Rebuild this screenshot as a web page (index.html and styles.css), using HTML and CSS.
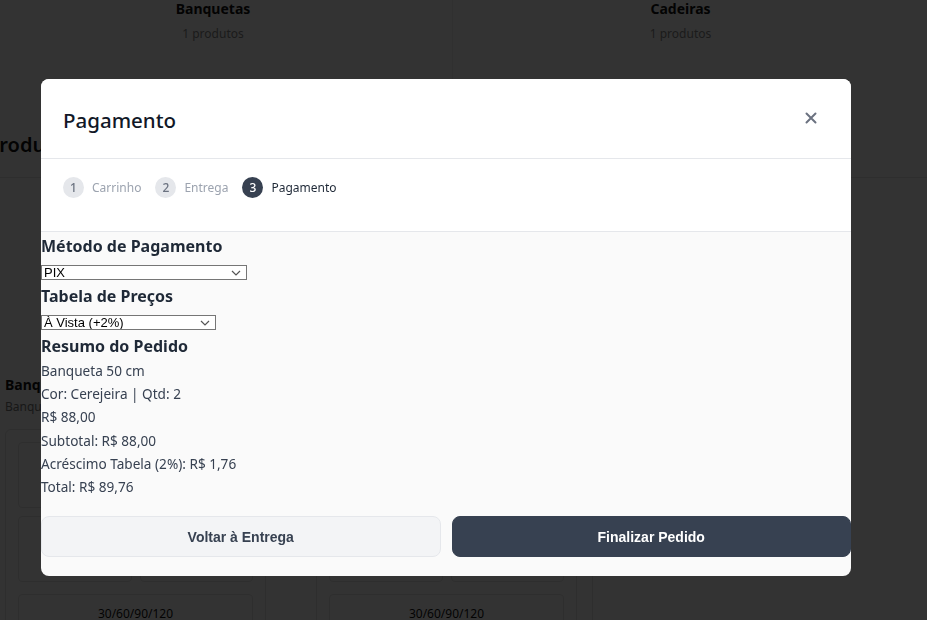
FILE: index.html
```html
<!DOCTYPE html>
<html lang="pt-BR">
<head>
<meta charset="utf-8">
<title>Pagamento</title>
<link rel="stylesheet" href="styles.css">
</head>
<body>
<div class="page">
  <div class="cats">
    <div class="cat"><div class="cat-name">Banquetas</div><div class="cat-count">1 produtos</div></div>
    <div class="cat"><div class="cat-name">Cadeiras</div><div class="cat-count">1 produtos</div></div>
  </div>
  <h2 class="sec-title">Produtos</h2>
  <div class="products">
    <div class="prod">
      <div class="prod-name">Banqueta 50 cm</div>
      <div class="prod-sub">Banqueta de madeira</div>
      <div class="prod-box">
        <div class="prod-grid"><div class="cell"></div><div class="cell"></div><div class="cell"></div><div class="cell"></div></div>
        <div class="cell wide">30/60/90/120</div>
      </div>
    </div>
    <div class="prod">
      <div class="prod-name">Cadeira</div>
      <div class="prod-sub">Cadeira de madeira</div>
      <div class="prod-box">
        <div class="prod-grid"><div class="cell"></div><div class="cell"></div><div class="cell"></div><div class="cell"></div></div>
        <div class="cell wide">30/60/90/120</div>
      </div>
    </div>
    <div class="prod side"></div>
  </div>
</div>

<div class="overlay">
  <div class="modal">
    <div class="modal-head">
      <h1 class="modal-title">Pagamento</h1>
      <button class="close" aria-label="Fechar">
        <svg width="12" height="12" viewBox="0 0 12 12"><path d="M1.5 1.5L10.5 10.5M10.5 1.5L1.5 10.5" stroke="#6b7280" stroke-width="2" stroke-linecap="round"/></svg>
      </button>
    </div>
    <div class="steps">
      <div class="step"><span class="num">1</span><span class="label">Carrinho</span></div>
      <div class="step"><span class="num">2</span><span class="label">Entrega</span></div>
      <div class="step active"><span class="num">3</span><span class="label">Pagamento</span></div>
    </div>
    <div class="modal-body">
      <h3 class="field-title">Método de Pagamento</h3>
      <select class="sel sel-method"><option>PIX</option><option>Cartão de Crédito</option><option>Boleto Bancário</option></select>
      <h3 class="field-title">Tabela de Preços</h3>
      <select class="sel sel-table"><option>À Vista (+2%)</option><option>30/60/90/120</option></select>
      <h3 class="field-title">Resumo do Pedido</h3>
      <div class="summary">
        <p>Banqueta 50 cm</p>
        <p>Cor: Cerejeira | Qtd: 2</p>
        <p>R$ 88,00</p>
        <p>Subtotal: R$ 88,00</p>
        <p>Acréscimo Tabela (2%): R$ 1,76</p>
        <p>Total: R$ 89,76</p>
      </div>
      <div class="actions">
        <button class="btn btn-light">Voltar à Entrega</button>
        <button class="btn btn-dark">Finalizar Pedido</button>
      </div>
    </div>
  </div>
</div>
</body>
</html>
```
FILE: styles.css
```css
* { box-sizing: border-box; }
html, body { margin: 0; padding: 0; }
body {
  width: 927px;
  height: 620px;
  overflow: hidden;
  background: #ffffff;
  font-family: "Noto Sans", "Open Sans", sans-serif;
  color: #111827;
}

/* underlying page */
.page { margin-left: -26px; width: 980px; height: 620px; overflow: hidden; }
.cats {
  display: grid;
  grid-template-columns: 478px 456px;
  height: 95px;
}
.cat { text-align: center; }
.cat + .cat { border-left: 1px solid #eeeeee; }
.cat-name { font-size: 14px; font-weight: 700; line-height: 18px; color: #111; }
.cat-count { font-size: 12px; line-height: 16px; margin-top: 8px; color: #888; }
.sec-title {
  margin: 38px 0 0 13px;
  font-size: 20px;
  font-weight: 600;
  line-height: 24px;
  color: #111;
  padding-bottom: 20px;
  border-bottom: 1px solid #e5e5e5;
}
.products {
  display: grid;
  grid-template-columns: 261px 261px 1fr;
  column-gap: 50px;
  padding: 198px 0 0 31px;
}
.prod-name { font-size: 14px; font-weight: 700; color: #111; line-height: 18px; }
.prod-sub { font-size: 12px; color: #777; line-height: 16px; margin-top: 5px; }
.prod-box {
  margin-top: 14px;
  border: 1px solid #e5e5e5;
  border-radius: 6px;
  padding: 12px;
  height: 240px;
}
.prod-grid { display: grid; grid-template-columns: 1fr 1fr; gap: 8px; }
.cell { border: 1px solid #e5e5e5; border-radius: 4px; height: 66px; }
.cell.wide { margin-top: 12px; height: 44px; text-align: center; font-size: 12px; line-height: 16px; color: #111; padding-top: 11px; }
.prod.side { border-left: 1px solid #e5e5e5; margin-left: -35px; }

/* overlay + modal */
.overlay {
  position: fixed;
  inset: 0;
  background: rgba(0, 0, 0, 0.8);
  padding: 79px 0 0 41px;
}
.modal {
  width: 810px;
  background: #fafafa;
  border-radius: 8px;
  overflow: hidden;
}
.modal-head {
  background: #ffffff;
  height: 80px;
  display: flex;
  align-items: center;
  justify-content: space-between;
  padding: 0 34px 0 22px;
  border-bottom: 1px solid #e5e7eb;
}
.modal-title {
  margin: 0;
  font-size: 20.5px;
  font-weight: 500;
  line-height: 28px;
  color: #111827;
  padding-top: 3px;
}
.close {
  background: none;
  border: 0;
  padding: 0;
  width: 12px;
  height: 12px;
  display: flex;
  align-items: center;
  justify-content: center;
  margin-top: -1px;
}
.steps {
  background: #ffffff;
  height: 73px;
  display: flex;
  align-items: flex-start;
  gap: 14px;
  padding: 18px 22px 0;
  border-bottom: 1px solid #e5e7eb;
}
.step { display: flex; align-items: center; gap: 8px; }
.num {
  width: 21px;
  height: 21px;
  border-radius: 50%;
  background: #e5e7eb;
  color: #6b7280;
  font-size: 12px;
  font-weight: 500;
  display: flex;
  align-items: center;
  justify-content: center;
}
.label { font-size: 12px; color: #9ca3af; line-height: 18px; }
.step.active .num { background: #374151; color: #ffffff; }
.step.active .label { color: #1f2937; }

.modal-body {
  padding: 3px 0 19px;
}
.field-title {
  margin: 0;
  font-size: 16px;
  font-weight: 700;
  line-height: 22px;
  color: #1f2937;
}
.sel {
  display: block;
  -webkit-appearance: none;
  appearance: none;
  font-family: "Liberation Sans", Arial, sans-serif;
  font-size: 13px;
  line-height: 13px;
  height: 15px;
  padding: 0 0 0 2px;
  margin: 8px 0 5px;
  border: 1px solid #767676;
  border-radius: 0;
  background-color: #ffffff;
  background-image: url("data:image/svg+xml;utf8,<svg xmlns='http://www.w3.org/2000/svg' width='10' height='6' viewBox='0 0 10 6'><path d='M1 1l4 4 4-4' fill='none' stroke='%23555' stroke-width='1.2'/></svg>");
  background-repeat: no-repeat;
  background-position: right 5px center;
  color: #000;
}
.sel-method { width: 206px; }
.sel-table { width: 175px; }
.summary { margin: 2px 0 18px; }
.summary p {
  margin: 0;
  font-size: 13.6px;
  line-height: 23.2px;
  color: #374151;
}
.actions {
  display: grid;
  grid-template-columns: 1fr 1fr;
  gap: 11px;
}
.btn {
  height: 41px;
  border-radius: 8px;
  font-family: "Liberation Sans", Arial, sans-serif;
  font-size: 14px;
  font-weight: 700;
  cursor: pointer;
}
.btn-light {
  background: #f3f4f6;
  border: 1px solid #e5e7eb;
  color: #374151;
}
.btn-dark {
  background: #374151;
  border: 1px solid #374151;
  color: #ffffff;
}
```
